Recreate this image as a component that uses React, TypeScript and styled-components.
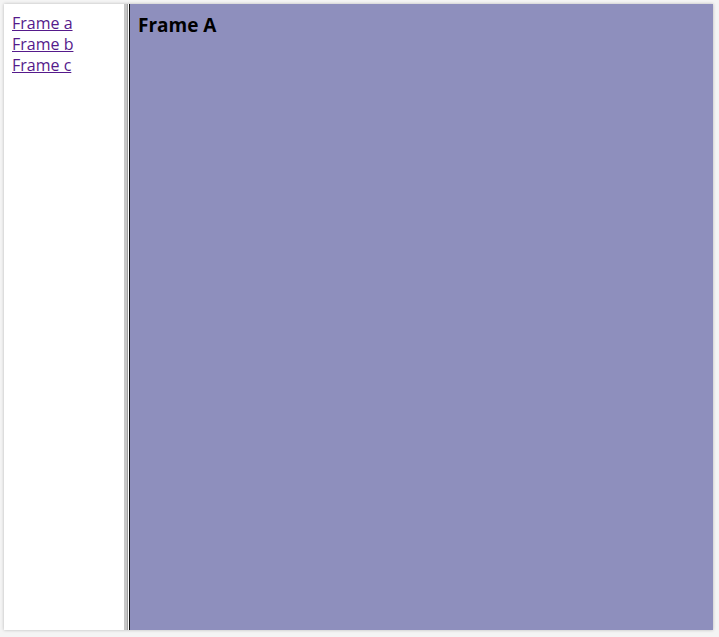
import React from "react";
import styled, { createGlobalStyle } from "styled-components";

const Global = createGlobalStyle`
  html, body { margin: 0; padding: 0; background: #f4f4f4; }
  body { font-family: "Open Sans", "Liberation Sans", sans-serif; }
`;

const Page = styled.div`
  padding: 4px 6px 7px 4px;
  height: 637px;
  box-sizing: border-box;
`;

const Frameset = styled.div`
  display: flex;
  height: 626px;
  width: 709px;
  box-shadow: 0 0 3px rgba(0, 0, 0, 0.25);
`;

const NavFrame = styled.nav`
  width: 120px;
  background: #ffffff;
  padding: 9px 8px 8px;
  box-sizing: border-box;
  display: flex;
  flex-direction: column;
`;

const NavLink = styled.a`
  color: #551a8b;
  font-size: 16px;
  line-height: 21px;
  text-decoration: underline;
`;

const Splitter = styled.div`
  width: 6px;
  display: flex;
  & > span:nth-child(1) { flex: 0 0 3px; background: #c6c6c6; }
  & > span:nth-child(2) { flex: 0 0 1px; background: #a0a0a0; }
  & > span:nth-child(3) { flex: 0 0 1px; background: #ffffff; }
  & > span:nth-child(4) { flex: 0 0 1px; background: #111111; }
`;

const ContentFrame = styled.main`
  flex: 1;
  background: #8e8fbd;
  padding: 8px;
  box-sizing: border-box;
`;

const Heading = styled.h3`
  margin: 0;
  font-size: 19px;
  line-height: 26px;
  font-weight: 700;
  color: #000;
`;

export default function App() {
  return (
    <>
      <Global />
      <Page>
        <Frameset>
          <NavFrame>
            <NavLink href="#a">Frame a</NavLink>
            <NavLink href="#b">Frame b</NavLink>
            <NavLink href="#c">Frame c</NavLink>
          </NavFrame>
          <Splitter>
            <span />
            <span />
            <span />
            <span />
          </Splitter>
          <ContentFrame>
            <Heading>Frame A</Heading>
          </ContentFrame>
        </Frameset>
      </Page>
    </>
  );
}
